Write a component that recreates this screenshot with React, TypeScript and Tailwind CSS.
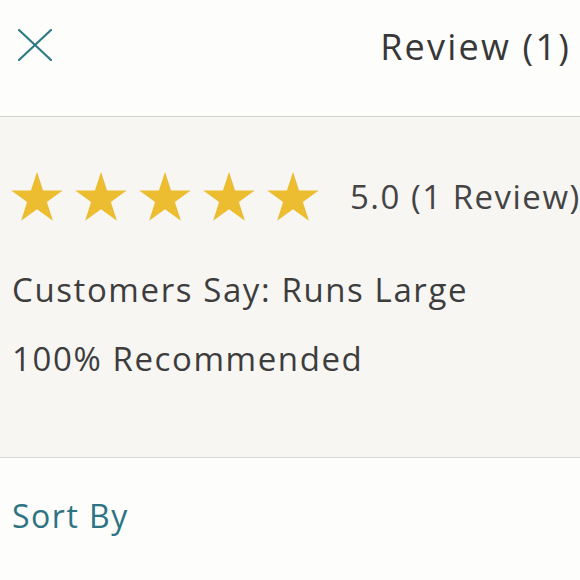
import React from "react";

const Star = () => (
  <svg width="52" height="50" viewBox="0 0 52 50" className="shrink-0">
    <polygon
      fill="#ecbc31"
      points="26,0 32.1,18.6 51.7,18.6 35.9,30.1 41.9,48.8 26,37.3 10.1,48.8 16.1,30.1 0.3,18.6 19.9,18.6"
    />
  </svg>
);

export default function App() {
  const font = { fontFamily: "'Open Sans', 'Noto Sans', sans-serif" };
  return (
    <div className="w-[580px] h-[580px] overflow-hidden bg-[#fdfdfb] flex flex-col" style={font}>
      <div className="h-[117px] shrink-0 border-b border-[#d2d2d0] flex items-center justify-between pl-[18px] pr-[9px] pb-[26px]">
        <svg width="34" height="32" viewBox="0 0 34 32" className="-mt-[1px]">
          <line x1="1" y1="1" x2="33" y2="31" stroke="#2e7a86" strokeWidth="2.2" strokeLinecap="round" />
          <line x1="33" y1="1" x2="1" y2="31" stroke="#2e7a86" strokeWidth="2.2" strokeLinecap="round" />
        </svg>
        <span className="mt-[4px] text-[36px] tracking-[2.2px] text-[#383838] whitespace-nowrap">Review (1)</span>
      </div>
      <div className="h-[341px] shrink-0 bg-[#f7f6f3] border-b border-[#d9d8d5] flex flex-col pl-[11px]">
        <div className="flex items-center gap-[12px] mt-[53px] h-[53px] whitespace-nowrap">
          <Star />
          <Star />
          <Star />
          <Star />
          <Star />
          <span className="ml-[19px] text-[33px] tracking-[1.5px] text-[#444] leading-none">5.0 (1 Review)</span>
        </div>
        <div className="mt-[47px] text-[33px] tracking-[1.6px] text-[#3d3d3d] leading-[40px] pl-[1px] whitespace-nowrap">Customers Say: Runs Large</div>
        <div className="mt-[29px] text-[33px] tracking-[1.6px] text-[#3d3d3d] leading-[40px] pl-[1px] whitespace-nowrap">100% Recommended</div>
      </div>
      <div className="pl-[12px] pt-[38px] text-[32px] tracking-[1.5px] text-[#2d7482] leading-[40px]">Sort By</div>
    </div>
  );
}
